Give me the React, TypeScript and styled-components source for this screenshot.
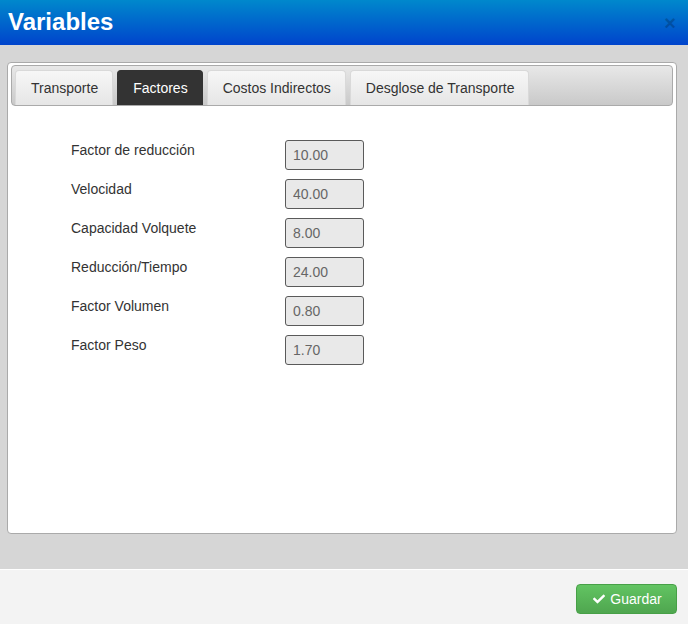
import { FC, Fragment, useState } from "react"

// components
import { FaCheck } from "react-icons/fa"

// styles
import styled, { createGlobalStyle } from "styled-components"

const GlobalStyle = createGlobalStyle`
    html, body {
        margin: 0;
        padding: 0;
        background: #ffffff;
    }
    body {
        font-family: "Liberation Sans", Arial, sans-serif;
        font-size: 14px;
        color: #333;
    }
`

interface Field {
    label: string,
    value: string,
}

const fields: Field[] = [
    { label: "Factor de reducción", value: "10.00" },
    { label: "Velocidad", value: "40.00" },
    { label: "Capacidad Volquete", value: "8.00" },
    { label: "Reducción/Tiempo", value: "24.00" },
    { label: "Factor Volumen", value: "0.80" },
    { label: "Factor Peso", value: "1.70" },
]

const tabs = ["Transporte", "Factores", "Costos Indirectos", "Desglose de Transporte"]

const Modal = styled.div`
    width: 688px;
    height: 624px;
    display: flex;
    flex-direction: column;
    overflow: hidden;
`

const Header = styled.div`
    height: 45px;
    flex: none;
    box-sizing: border-box;
    display: flex;
    align-items: center;
    justify-content: space-between;
    padding: 0 12px 0 8px;
    background: linear-gradient(to bottom, #0088cc 0%, #0044cc 100%);
`

const Title = styled.h3`
    margin: 0;
    margin-top: -2px;
    font-size: 24px;
    font-weight: bold;
    color: #ffffff;
    line-height: 30px;
`

const Close = styled.span`
    font-size: 20px;
    font-weight: bold;
    line-height: 20px;
    color: #000;
    opacity: 0.2;
    cursor: pointer;
`

const Body = styled.div`
    flex: 1;
    background: #d6d6d6;
    padding: 17px 11px 35px 7px;
    display: flex;
`

const Panel = styled.div`
    flex: 1;
    background: #ffffff;
    border: 1px solid #aaaaaa;
    border-radius: 4px;
    padding: 2px 3px 3px;
    display: flex;
    flex-direction: column;
`

const TabBar = styled.ul`
    margin: 0;
    list-style: none;
    height: 35px;
    box-sizing: content-box;
    padding: 4px 0 0 3px;
    display: flex;
    align-items: flex-end;
    gap: 4px;
    border: 1px solid #aaaaaa;
    border-radius: 4px;
    background: linear-gradient(to bottom, #e8e8e8 0%, #c9c9c9 100%);
`

const Tab = styled.li<{ active?: boolean }>`
    height: 35px;
    box-sizing: border-box;
    padding: 0 14px 0 15px;
    display: flex;
    align-items: center;
    border: 1px solid ${({ active }) => active ? "#333333" : "#d9d9d9"};
    border-bottom: none;
    border-radius: 4px 4px 0 0;
    background: ${({ active }) => active
        ? "#333333"
        : "linear-gradient(to bottom, #f7f7f7 0%, #e6e6e6 100%)"};
    color: ${({ active }) => active ? "#ffffff" : "#333333"};
    font-size: 14px;
    white-space: nowrap;
    cursor: pointer;
`

const Form = styled.div`
    margin-top: 34px;
    padding-left: 60px;
    display: grid;
    grid-template-columns: 214px 79px;
    row-gap: 9px;
`

const Label = styled.label`
    font-size: 14px;
    line-height: 20px;
    color: #333333;
`

const Input = styled.input`
    width: 79px;
    height: 30px;
    box-sizing: border-box;
    margin: 0;
    padding: 0 7px;
    border: 1px solid #5a5a5a;
    border-radius: 3px;
    background: #e9e9e9;
    color: #666666;
    font-family: "Liberation Sans", Arial, sans-serif;
    font-size: 14px;
`

const Footer = styled.div`
    height: 55px;
    flex: none;
    box-sizing: border-box;
    border-top: 1px solid #ffffff;
    background: #f3f3f3;
    display: flex;
    justify-content: flex-end;
    padding: 14px 11px 0 0;
`

const SaveButton = styled.button`
    width: 101px;
    height: 30px;
    box-sizing: border-box;
    display: flex;
    align-items: center;
    justify-content: center;
    gap: 5px;
    border: 1px solid #47a047;
    border-radius: 4px;
    background: linear-gradient(to bottom, #62c462 0%, #4fa64f 100%);
    color: #ffffff;
    font-family: "Liberation Sans", Arial, sans-serif;
    font-size: 14px;
    padding: 0 0 0 2px;
    cursor: pointer;

    svg {
        width: 12px;
        height: 12px;
    }
`

const App: FC = () => {
    const [active, setActive] = useState(1)

    return (
        <Modal>
            <GlobalStyle />
            <Header>
                <Title>Variables</Title>
                <Close>×</Close>
            </Header>
            <Body>
                <Panel>
                    <TabBar>
                        {tabs.map((t, i) => (
                            <Tab key={t} active={i === active} onClick={() => setActive(i)}>{t}</Tab>
                        ))}
                    </TabBar>
                    <Form>
                        {fields.map(f => (
                            <Fragment key={f.label}>
                                <Label>{f.label}</Label>
                                <Input value={f.value} disabled readOnly />
                            </Fragment>
                        ))}
                    </Form>
                </Panel>
            </Body>
            <Footer>
                <SaveButton><FaCheck /> Guardar</SaveButton>
            </Footer>
        </Modal>
    )
}

export default App
